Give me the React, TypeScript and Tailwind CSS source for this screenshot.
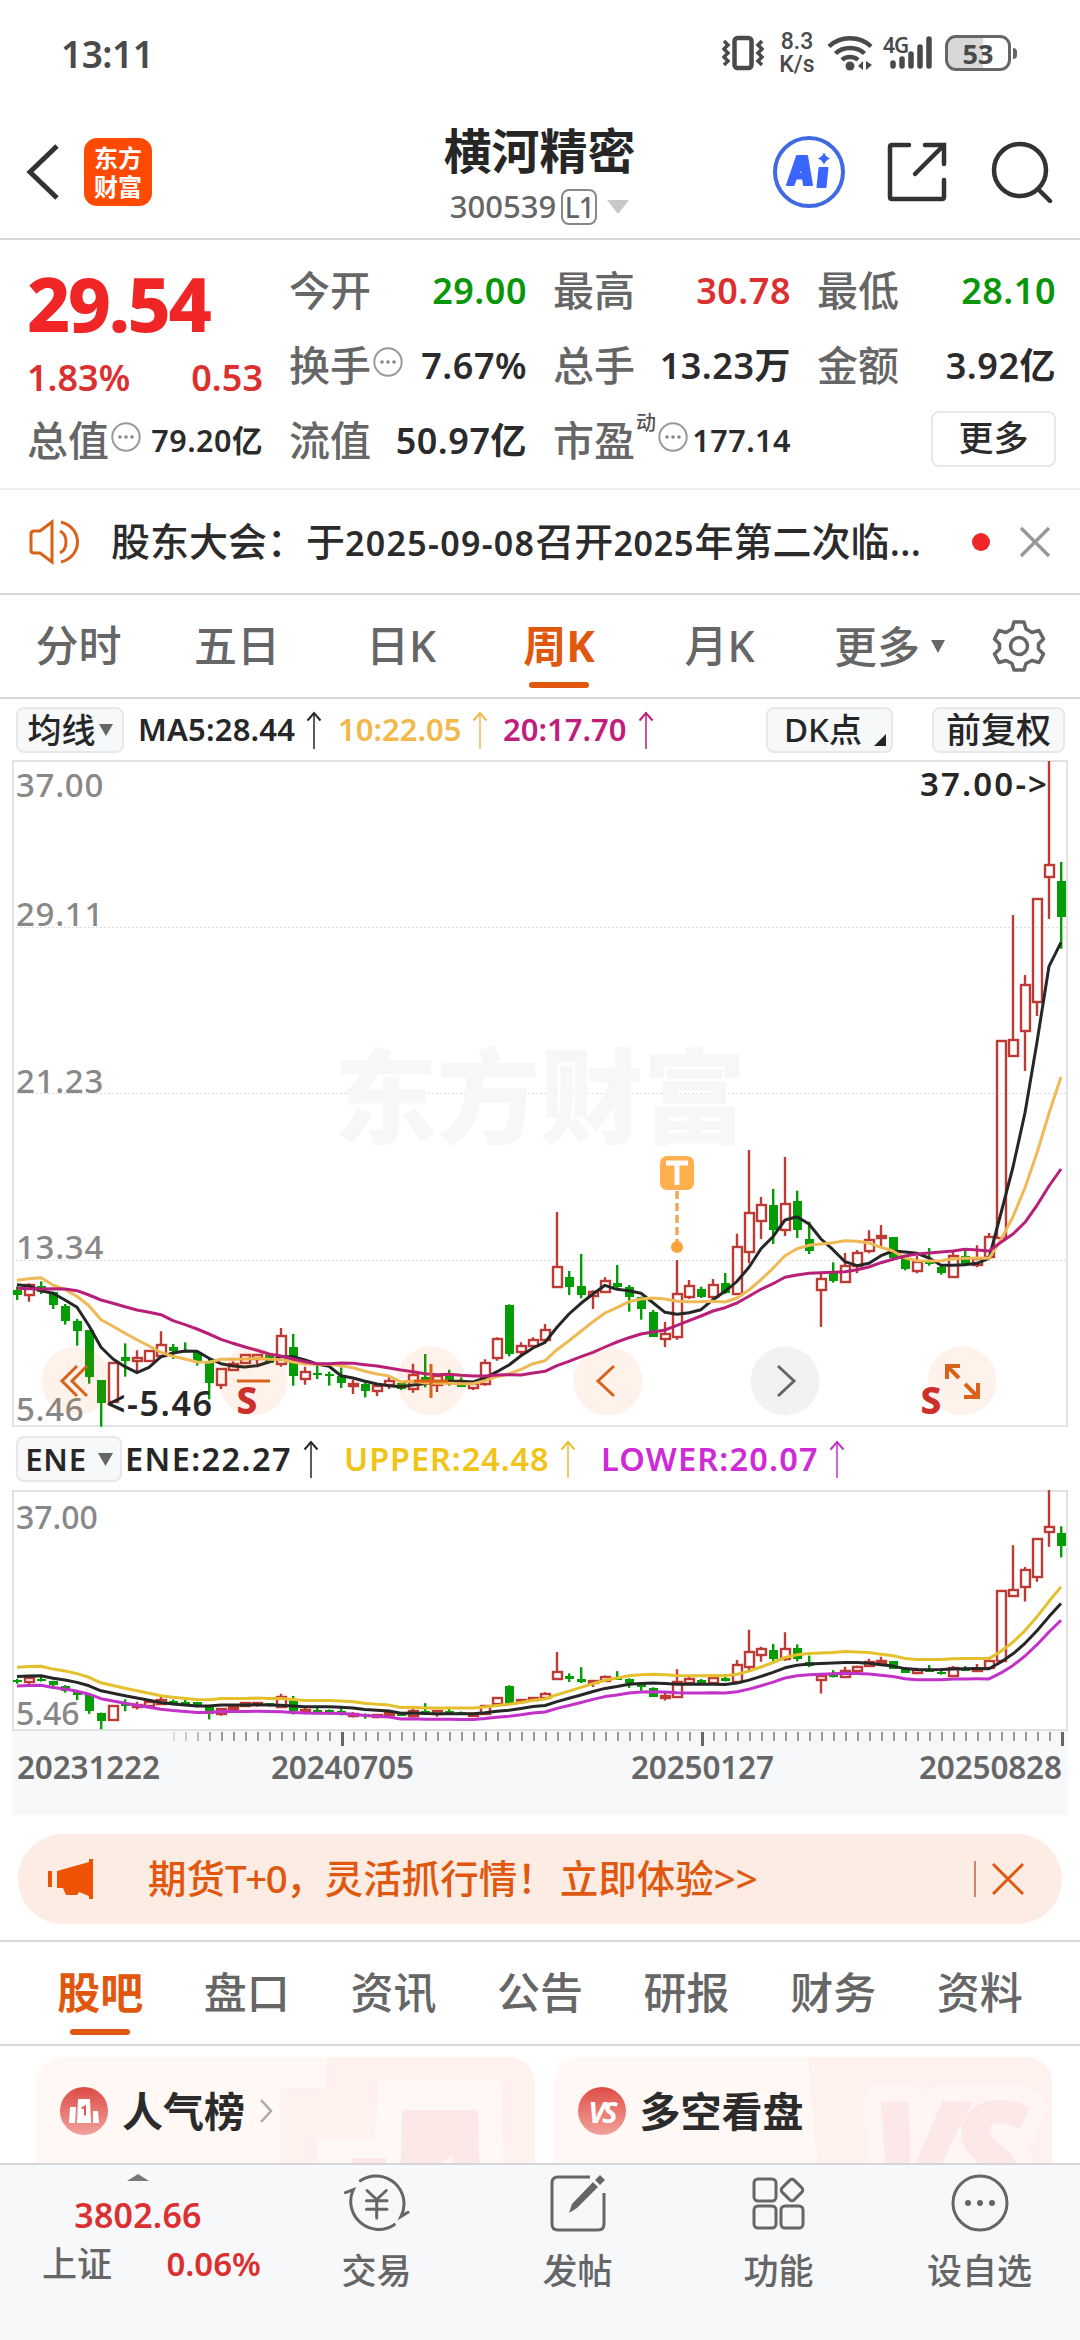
import React from 'react';

type Candle = [kind: 'r' | 'g', high: number, top: number, bottom: number, low: number];

const RED = '#bd3a35';
const GREEN = '#059d05';

// Weekly candles, values in thirds of a pixel around the 16.2 level
const candles: Candle[] = [
    ['g', 472, 483, 497, 513], ['r', 463, 467, 497, 518], ['g', 457, 470, 490, 495], ['g', 488, 490, 527, 540],
    ['g', 525, 530, 576, 587], ['g', 570, 576, 607, 650], ['g', 604, 604, 743, 764], ['g', 754, 754, 822, 893],
    ['r', 701, 701, 820, 820], ['g', 643, 683, 696, 743], ['r', 664, 688, 697, 728], ['r', 665, 665, 695, 695],
    ['r', 607, 647, 680, 680], ['g', 645, 655, 665, 690], ['g', 640, 662, 668, 670], ['g', 665, 668, 698, 710],
    ['g', 690, 698, 762, 811], ['r', 721, 721, 767, 780], ['r', 697, 704, 723, 723], ['r', 677, 677, 703, 703],
    ['r', 677, 677, 690, 705], ['g', 677, 677, 703, 703], ['r', 597, 621, 704, 713], ['g', 615, 653, 741, 770],
    ['r', 713, 730, 750, 767], ['g', 710, 732, 738, 750], ['g', 728, 734, 740, 770], ['g', 715, 741, 762, 777],
    ['r', 752, 764, 768, 795], ['g', 762, 764, 785, 805], ['r', 771, 771, 785, 801], ['r', 745, 757, 767, 780],
    ['g', 760, 763, 779, 783], ['r', 704, 737, 781, 791], ['g', 675, 743, 755, 775], ['r', 740, 740, 768, 789],
    ['g', 722, 740, 756, 770], ['g', 745, 752, 773, 773], ['r', 762, 765, 776, 783], ['r', 691, 701, 766, 770],
    ['r', 625, 631, 686, 695], ['g', 526, 528, 674, 682], ['r', 640, 652, 668, 682], ['r', 625, 632, 650, 655],
    ['r', 585, 602, 634, 640], ['r', 249, 415, 475, 475], ['g', 426, 445, 474, 498], ['g', 375, 472, 498, 508],
    ['r', 484, 488, 500, 540], ['r', 445, 457, 490, 490], ['g', 408, 462, 474, 480], ['g', 468, 475, 503, 548],
    ['g', 503, 503, 540, 572], ['g', 543, 548, 623, 623], ['r', 579, 614, 630, 654], ['r', 393, 496, 623, 632],
    ['r', 453, 472, 503, 510], ['g', 473, 479, 503, 507], ['r', 450, 468, 505, 510], ['g', 432, 462, 493, 495],
    ['r', 314, 353, 496, 496], ['r', 63, 252, 370, 403], ['r', 204, 227, 276, 330], ['g', 180, 228, 303, 345],
    ['r', 84, 224, 304, 321], ['g', 185, 216, 304, 327], ['g', 278, 329, 365, 375], ['r', 430, 449, 482, 594],
    ['g', 400, 433, 455, 461], ['r', 372, 410, 460, 460], ['r', 363, 371, 410, 433], ['r', 304, 332, 366, 373],
    ['r', 288, 322, 326, 357], ['g', 324, 324, 387, 387], ['g', 385, 387, 421, 424], ['r', 380, 400, 427, 433],
    ['g', 357, 395, 405, 410], ['g', 405, 415, 433, 437], ['r', 366, 380, 445, 445], ['g', 366, 380, 406, 408],
    ['r', 349, 390, 408, 415], ['r', 312, 324, 384, 384], ['r', -264, -264, 326, 326], ['r', -642, -266, -219, -219],
    ['r', -462, -433, -294, -174], ['r', -691, -691, -380, -339], ['r', -1104, -791, -755, -630], ['g', -801, -744, -636, -541],
];

const ma5 = [
    467, 471, 485, 493, 513, 535, 590, 655, 690, 713, 731, 715, 683, 672, 666, 667, 688, 704, 711, 714, 710, 699,
    683, 683, 693, 705, 712, 740, 747, 757, 765, 770, 773, 768, 764, 759, 757, 757, 759, 747, 728, 708, 680, 657,
    640, 595, 555, 523, 495, 469, 481, 485, 493, 521, 550, 556, 551, 542, 512, 487, 457, 415, 359, 323, 273, 263,
    285, 330, 362, 398, 410, 403, 380, 366, 369, 373, 387, 409, 409, 407, 403, 388, 252, 114, -49, -261, -488, -560,
];
const ma10 = [
    454, 449, 446, 468, 482, 502, 530, 572, 592, 613, 632, 651, 670, 682, 690, 699, 700, 691, 691, 690, 688, 691,
    692, 699, 705, 706, 706, 710, 716, 727, 735, 741, 759, 757, 762, 763, 763, 764, 764, 755, 743, 734, 721, 704,
    695, 662, 635, 607, 578, 552, 536, 518, 510, 507, 510, 517, 518, 518, 517, 519, 507, 483, 452, 418, 380, 359,
    349, 345, 341, 335, 337, 342, 355, 366, 387, 395, 396, 395, 389, 388, 387, 388, 332, 263, 176, 71, -47, -156,
];
const ma20 = [
    478, 479, 480, 479, 480, 485, 498, 513, 523, 533, 543, 550, 557, 575, 587, 600, 615, 631, 643, 654, 664, 675,
    681, 690, 698, 704, 704, 702, 703, 707, 711, 717, 723, 728, 734, 737, 736, 739, 741, 741, 738, 737, 738, 732,
    727, 710, 697, 683, 670, 654, 639, 626, 615, 609, 603, 589, 575, 561, 546, 536, 522, 502, 481, 464, 445, 438,
    433, 431, 430, 428, 422, 414, 401, 391, 381, 375, 372, 369, 366, 361, 363, 366, 340, 315, 280, 229, 171, 120,
];

const xAt = (i: number) => 5 + i * 12;
const mainY = (v: number) => v / 3 + 369;
const subY = (v: number) => ((v / 3 + 368) / 665) * 239;
const priceAt = (v: number) => 37 - ((v / 3 + 368) / 665) * 31.54;
const priceToSub = (p: number) => ((37 - p) / 31.54) * 239;

const linePoints = (values: number[], toY: (v: number) => number) =>
    values.map((v, i) => `${xAt(i)},${toY(v).toFixed(1)}`).join(' ');

function Candles({ toY }: { toY: (v: number) => number }) {
    return (
        <g>
            {candles.map(([kind, high, top, bottom, low], i) => {
                const x = xAt(i);
                const t = Math.round(toY(top));
                const b = Math.max(Math.round(toY(bottom)), t + 2);
                if (kind === 'g') {
                    return (
                        <g key={i} fill={GREEN}>
                            <rect x={x - 1} y={toY(high)} width={2.4} height={toY(low) - toY(high)} />
                            <rect x={x - 4} y={t} width={9} height={b - t} />
                        </g>
                    );
                }
                return (
                    <g key={i} stroke={RED} strokeWidth={2.4} fill="none">
                        <path d={`M${x} ${toY(high)}V${t}M${x} ${b}V${toY(low)}`} />
                        <rect x={x - 4} y={t} width={9} height={b - t} />
                    </g>
                );
            })}
        </g>
    );
}

function UpArrow({ color }: { color: string }) {
    return (
        <svg width="16" height="38" viewBox="0 0 16 38" fill="none" stroke={color} className="shrink-0">
            <path d="M8 2V38" strokeWidth="1.5" />
            <path d="M1.5 9.5L8 2L14.5 9.5" strokeWidth="2" />
        </svg>
    );
}

function Dots() {
    return (
        <svg width="30" height="30" viewBox="0 0 30 30" className="shrink-0">
            <circle cx="15" cy="15" r="13.7" fill="none" stroke="#9a9a9a" strokeWidth="2" />
            <circle cx="9" cy="15" r="1.8" fill="#888" />
            <circle cx="15" cy="15" r="1.8" fill="#888" />
            <circle cx="21" cy="15" r="1.8" fill="#888" />
        </svg>
    );
}

function StatusBar() {
    return (
        <div className="flex h-[106px] items-center justify-between pr-[63px] pl-[61px] text-[#4a4a4a]">
            <span className="text-[37px] font-semibold tracking-[-0.5px]">13:11</span>
            <div className="flex items-center">
                <svg width="42" height="36" viewBox="0 0 42 36" fill="none" stroke="#4a4a4a" strokeWidth="3">
                    <rect x="12.5" y="3" width="17" height="30" rx="3" strokeWidth="4.5" />
                    <path d="M2 6L6 10L2 14L6 18L2 22L6 26L2 30M40 6L36 10L40 14L36 18L40 22L36 26L40 30" strokeWidth="3.5" />
                </svg>
                <div className="ml-[15px] flex w-[36px] flex-col items-center font-['Roboto'] text-[23px] leading-[23px] font-medium">
                    <span>8.3</span>
                    <span>K/s</span>
                </div>
                <svg width="46" height="36" viewBox="0 0 46 36" fill="none" stroke="#4a4a4a" strokeWidth="4.5" className="ml-[12px]">
                    <path d="M2 11.5C13 0.5 33 0.5 44 11.5" />
                    <path d="M8.500 18.500C16 11 30 11 37.500 18.500" />
                    <path d="M15 25C19 21 27 21 31 25" />
                    <circle cx="23" cy="31" r="4.5" fill="#4a4a4a" stroke="none" />
                    <path d="M31 31l5-5v9zM45 30l-6 5v-9z" fill="#4a4a4a" stroke="none" />
                </svg>
                <div className="relative ml-[10px] h-[36px] w-[52px]">
                    <span className="absolute top-0 left-0 text-[21px] leading-[21px] font-semibold tracking-[-1px]">4G</span>
                    <svg width="52" height="36" viewBox="0 0 52 36" stroke="#4a4a4a" strokeWidth="5.500" strokeLinecap="round">
                        <path d="M10 28V31M19 24V31M28 19V31M37 12V31M46 4V31" />
                    </svg>
                </div>
                <div className="ml-[10px] flex h-[36px] w-[66px] items-center justify-center rounded-[11px] border-[3px] border-[#666] bg-linear-to-r from-[#d8d8d8] from-58% to-white to-58% text-[27px] font-bold">
                    53
                </div>
                <div className="ml-[2px] h-[11px] w-[4px] rounded-r bg-[#666]" />
            </div>
        </div>
    );
}

function Header() {
    return (
        <div className="flex h-[134px] items-center justify-between border-b-2 border-[#d8d8d8] pr-[27px] pl-[26px]">
            <div className="flex w-[340px] items-center">
                <svg width="34" height="56" viewBox="0 0 34 56" fill="none" stroke="#333" strokeWidth="5">
                    <path d="M31 2L4 28L31 54" />
                </svg>
                <div className="ml-6 flex h-[68px] w-[68px] flex-col items-center justify-center rounded-[13px] bg-[#ff4a05] text-[24px] leading-[29px] font-bold text-white">
                    <span>东方</span>
                    <span>财富</span>
                </div>
            </div>
            <div className="flex flex-col items-center pt-1">
                <h1 className="text-[48px] leading-[56px] font-semibold text-[#262626]">横河精密</h1>
                <div className="mt-[9px] flex h-[38px] items-center text-[31px] font-medium text-[#666]">
                    <span>300539</span>
                    <span className="ml-[5px] flex h-[36px] w-[36px] items-center justify-center rounded-[8px] border-2 border-[#888] text-[28px] tracking-[-1px]">L1</span>
                    <svg width="22" height="14" viewBox="0 0 22 14" className="ml-[10px]">
                        <path d="M0 0H22L11 14Z" fill="#c8c8c8" />
                    </svg>
                </div>
            </div>
            <div className="flex w-[340px] items-center justify-end">
                <svg width="74" height="74" viewBox="0 0 74 74">
                    <circle cx="37" cy="37" r="34" fill="none" stroke="#4169e0" strokeWidth="4" />
                    <path d="M25 21H35L40 50H32L31 43.500H24L21.500 50H15ZM29.500 32L26.500 39H30.500Z" fill="#3a66ff" stroke="#3a66ff" strokeWidth="2" strokeLinejoin="round" fillRule="evenodd" />
                    <path d="M47.500 33H55.500L53.500 52H45.500Z" fill="#3a66ff" stroke="#3a66ff" strokeWidth="2" strokeLinejoin="round" />
                    <path d="M52 17.500Q54 22 58 23.500Q54 25 52 29.500Q50 25 46 23.500Q50 22 52 17.500Z" fill="#3a66ff" />
                </svg>
                <svg width="62" height="62" viewBox="0 0 62 62" fill="none" stroke="#333" strokeWidth="4.5" strokeLinecap="round" className="ml-[40px]">
                    <path d="M23 4H6Q4 4 4 6V56Q4 58 6 58H56Q58 58 58 56V39" />
                    <path d="M39 4H58V23M58 4L29 33" />
                </svg>
                <svg width="62" height="62" viewBox="0 0 62 62" fill="none" stroke="#333" strokeWidth="4.5" strokeLinecap="round" className="ml-[43px]">
                    <circle cx="29" cy="29" r="26" />
                    <path d="M47 48L59 60" />
                </svg>
            </div>
        </div>
    );
}

interface QuoteProps {
    label: string;
    value: string;
    color?: string;
    dots?: boolean;
    small?: boolean;
    mark?: string;
}

function Quote({ label, value, color = 'text-[#2b2b2b]', dots, small, mark }: QuoteProps) {
    return (
        <div className="flex h-[75px] items-center">
            <span className="text-[41px] text-[#666]">{label}</span>
            {mark && <span className="mb-9 ml-[1px] text-[20px] text-[#555]">{mark}</span>}
            {dots && <span className="mb-2 ml-[2px]"><Dots /></span>}
            <span className={`ml-auto font-semibold tracking-[0.5px] ${small ? 'text-[30.5px]' : 'text-[36px]'} ${color}`}>{value}</span>
        </div>
    );
}

function Quotes() {
    return (
        <div className="flex h-[250px] justify-between border-b-2 border-[#eee] pt-[13px] pr-[24px] pl-[27px] font-medium">
            <div className="w-[236px]">
                <div className="flex h-[100px] items-center text-[75px] font-extrabold tracking-[-2.5px] text-[#f02525]">29.54</div>
                <div className="flex h-[50px] items-center justify-between text-[36px] font-semibold text-[#dc2f2f]">
                    <span>1.83%</span>
                    <span>0.53</span>
                </div>
                <Quote label="总值" value="79.20亿" dots small />
            </div>
            <div className="w-[238px]">
                <Quote label="今开" value="29.00" color="text-[#0a960a]" />
                <Quote label="换手" value="7.67%" dots />
                <Quote label="流值" value="50.97亿" />
            </div>
            <div className="w-[238px]">
                <Quote label="最高" value="30.78" color="text-[#dc2f2f]" />
                <Quote label="总手" value="13.23万" />
                <Quote label="市盈" value="177.14" mark="动" dots small />
            </div>
            <div className="w-[239px]">
                <Quote label="最低" value="28.10" color="text-[#0a960a]" />
                <Quote label="金额" value="3.92亿" />
                <div className="ml-auto mt-[8px] flex h-[56px] w-[125px] items-center justify-center rounded-lg border-2 border-[#e6e8ea] pb-1 text-[35px] text-[#2b2b2b]">更多</div>
            </div>
        </div>
    );
}

function Notice() {
    return (
        <div className="flex h-[105px] items-center border-b-2 border-[#d8d8d8] pr-[29px] pl-[29px]">
            <svg width="52" height="46" viewBox="0 0 52 46" fill="none" stroke="#d9621a" strokeWidth="3">
                <path d="M23 3L11 12H5Q2 12 2 15V31Q2 34 5 34H11L23 43Z" />
                <path d="M31 12C39 16 39 30 31 34M32 3C54 9 54 37 32 43" />
            </svg>
            <p className="ml-[30px] w-[831px] pb-[2px] text-[39px] font-medium whitespace-nowrap text-[#2b2b2b]">
                股东大会：于<span className="text-[34px] font-semibold tracking-[1.3px]">2025-09-08</span>召开<span className="text-[34px] font-semibold tracking-[0.8px]">2025</span>年第二次临...
            </p>
            <span className="ml-[30px] h-[18px] w-[18px] rounded-full bg-[#f02525]" />
            <svg width="32" height="32" viewBox="0 0 32 32" stroke="#999" strokeWidth="3.5" className="ml-auto">
                <path d="M2 2L30 30M30 2L2 30" />
            </svg>
        </div>
    );
}

function PeriodTabs() {
    const tabs = [
        { name: '分时', width: 'w-[157px]' },
        { name: '五日', width: 'w-[160px]' },
        { name: '日K', width: 'w-[168px]' },
        { name: '周K', width: 'w-[148px]' },
        { name: '月K', width: 'w-[173px]' },
    ];
    return (
        <div className="flex h-[104px] items-center border-b-2 border-[#d8d8d8] text-[43px] font-medium text-[#666]">
            {tabs.map(tab => (
                <div key={tab.name} className={`flex h-full flex-col items-center justify-center ${tab.width} ${tab.name === '周K' ? 'font-bold text-[#e0580f]' : ''}`}>
                    <span className="pt-[19px]">{tab.name}</span>
                    <span className={`mt-[15px] h-[6px] w-[60px] rounded-full ${tab.name === '周K' ? 'bg-[#e0580f]' : ''}`} />
                </div>
            ))}
            <span className="ml-[28px]">更多</span>
            <svg width="14" height="13" viewBox="0 0 14 13" className="ml-[11px]">
                <path d="M0 0H14L7 13Z" fill="#666" />
            </svg>
            <svg width="54" height="54" viewBox="0 0 54 54" fill="none" stroke="#666" strokeWidth="3.5" strokeLinejoin="round" className="ml-[47px]">
                <path d="M22 3H32L34 10L40 13.500L47 11.500L51.500 20L46.500 25V30L51.500 35L47 43.500L40 41.500L34 44.500L32 51H22L20 44.500L14 41.500L7 43.500L2.500 35L7.500 30V25L2.500 20L7 11.500L14 13.500L20 10Z" />
                <circle cx="27" cy="27" r="8.500" />
            </svg>
        </div>
    );
}

function MainChart() {
    const axis = [
        { label: '37.00', y: 37 },
        { label: '29.11', y: 166 },
        { label: '21.23', y: 333 },
        { label: '13.34', y: 499 },
        { label: '5.46', y: 661 },
    ];
    const controls = [64, 241, 419, 596, 773, 950];
    return (
        <svg width="1056" height="668" viewBox="0 0 1056 668" className="ml-3 block overflow-visible font-medium">
            <rect x="1" y="1" width="1054" height="665" fill="none" stroke="#e2e2e2" strokeWidth="2" />
            <path d="M0 167.500H1056M0 333.500H1056M0 500.500H1056" stroke="#dcdcdc" strokeDasharray="2 2" />
            <text x="322" y="376" fontSize="103" fontWeight="900" fill="#f7f7f7">东方财富</text>
            {axis.map(a => (
                <text key={a.label} x="4" y={a.y} fontSize="33" letterSpacing="0.7" fill="#888">{a.label}</text>
            ))}
            <Candles toY={mainY} />
            <g fill="none" strokeWidth="3" strokeLinejoin="round">
                <polyline points={linePoints(ma5, mainY)} stroke="#262626" />
                <polyline points={linePoints(ma10, mainY)} stroke="#efb955" />
                <polyline points={linePoints(ma20, mainY)} stroke="#b81f78" />
            </g>
            <text x="908" y="36" fontSize="33" fontWeight="600" textLength="127" fill="#262626">37.00-&gt;</text>
            <text x="94" y="656" fontSize="34" fontWeight="600" textLength="106" fill="#262626">&lt;-5.46</text>
            {controls.map(cx => (
                <circle key={cx} cx={cx} cy="621" r="34.500" fill={cx === 773 ? '#000' : '#ee5305'} fillOpacity={cx === 773 ? 0.05 : 0.08} />
            ))}
            <g fill="none" stroke="#d9621a" strokeWidth="3">
                <path d="M65 606L50 621L65 636M75 606L60 621L75 636" />
                <path d="M225 621H258M402 621H436M419 604V638" />
                <path d="M602 606L586 621L602 636" />
                <path d="M766 606L782 621L766 636" stroke="#666" />
                <path d="M935 619V606H948M935 606L947 618M966 623V637H952M966 637L953 624" strokeWidth="4" />
            </g>
            <g fill="#cc302c" fontSize="37" fontWeight="800" textAnchor="middle">
                <text x="235" y="654">S</text>
                <text x="919" y="654">S</text>
            </g>
            <rect x="648" y="396" width="34" height="34" rx="7" fill="#ffaf4d" />
            <path d="M654 403H676M665 403V425" stroke="#fff" strokeWidth="5" />
            <path d="M665 431V482" stroke="#efa956" strokeWidth="3.500" strokeDasharray="8 4" />
            <circle cx="665" cy="487" r="6" fill="#fba23a" />
        </svg>
    );
}

function SubChart() {
    const scaled = (ratio: number) =>
        ma10.map((v, i) => `${xAt(i)},${priceToSub(priceAt(v) * ratio).toFixed(1)}`).join(' ');
    return (
        <svg width="1056" height="241" viewBox="0 0 1056 241" className="ml-3 block overflow-visible font-medium">
            <rect x="1" y="1" width="1054" height="239" fill="none" stroke="#e2e2e2" strokeWidth="2" />
            <text x="4" y="39" fontSize="32" fill="#888">37.00</text>
            <text x="4" y="235" fontSize="32" fill="#888">5.46</text>
            <Candles toY={subY} />
            <g fill="none" strokeWidth="3" strokeLinejoin="round">
                <polyline points={scaled(1.1)} stroke="#e5c02c" />
                <polyline points={scaled(1)} stroke="#262626" />
                <polyline points={scaled(0.9)} stroke="#c231c8" />
            </g>
        </svg>
    );
}

function TimeAxis() {
    const ticks = Array.from({ length: 75 }, (_, k) => 162 + k * 12);
    return (
        <svg width="1056" height="84" viewBox="0 0 1056 84" className="ml-3 block bg-[#f7f8fa] font-semibold">
            {ticks.map((x, k) => {
                const major = x === 330 || x === 690 || x === 1050;
                return (
                    <rect key={x} x={x - 1} y="1" width={major ? 3 : 2} height={major ? 14 : 9} fill={major ? '#666' : '#999'} opacity={Math.min(1, 0.3 + k * 0.18)} />
                );
            })}
            <g fontSize="31.500" fill="#666">
                <text x="5" y="48" textLength="143">20231222</text>
                <text x="259" y="48" textLength="143">20240705</text>
                <text x="619" y="48" textLength="143">20250127</text>
                <text x="907" y="48" textLength="143">20250828</text>
            </g>
        </svg>
    );
}

function MaBar() {
    return (
        <div className="flex h-[61px] items-center pr-[15px] pl-4 text-[31px] font-semibold text-[#262626]">
            <div className="flex h-[46px] w-[108px] items-center justify-center rounded-lg border-2 border-[#e6e8ea] bg-[#f7f8fa] text-[34px] font-medium">
                均线
                <svg width="14" height="12" viewBox="0 0 14 12" className="ml-[3px]">
                    <path d="M0 0H14L7 12Z" fill="#666" />
                </svg>
            </div>
            <span className="ml-[14px] mr-[10px] w-[158px] tracking-[0.2px]">MA5:28.44</span>
            <UpArrow color="#262626" />
            <span className="ml-[16px] mr-[10px] w-[124px] text-[#f2b84b]">10:22.05</span>
            <UpArrow color="#f2b84b" />
            <span className="ml-[15px] mr-[9px] w-[126px] text-[#c01d7c]">20:17.70</span>
            <UpArrow color="#c01d7c" />
            <div className="relative ml-auto flex h-[46px] w-[127px] items-center rounded-lg border-2 border-[#e6e8ea] bg-[#f7f8fa] pl-[16px] text-[33px] font-medium">
                DK点
                <svg width="12" height="12" viewBox="0 0 12 12" className="absolute right-[5px] bottom-[5px]">
                    <path d="M12 0V12H0Z" fill="#262626" />
                </svg>
            </div>
            <div className="ml-[39px] flex h-[46px] w-[133px] items-center justify-center rounded-lg border-2 border-[#e6e8ea] bg-[#f7f8fa] text-[35px] font-medium">前复权</div>
        </div>
    );
}

function EneBar() {
    return (
        <div className="flex h-[62px] items-center pl-4 text-[32.500px] font-semibold text-[#262626]">
            <div className="flex h-[46px] w-[106px] items-center justify-center rounded-lg border-2 border-[#e6e8ea] bg-[#f7f8fa] text-[31px]">
                <span className="tracking-[0.8px]">ENE</span>
                <svg width="15" height="13" viewBox="0 0 15 13" className="ml-[11px]">
                    <path d="M0 0H15L7.500 13Z" fill="#666" />
                </svg>
            </div>
            <span className="ml-[3px] w-[178px] tracking-[1.4px] whitespace-nowrap">ENE:22.27</span>
            <UpArrow color="#262626" />
            <span className="ml-[25px] w-[216px] tracking-[0.9px] whitespace-nowrap text-[#f0c419]">UPPER:24.48</span>
            <UpArrow color="#e5c02c" />
            <span className="ml-[25px] w-[228px] tracking-[1.2px] whitespace-nowrap text-[#ce2bd6]">LOWER:20.07</span>
            <UpArrow color="#c231c8" />
        </div>
    );
}

function AdBanner() {
    return (
        <div className="mx-[18px] mt-[19px] mb-[16px] flex h-[90px] items-center rounded-full bg-[#fcece3] pr-[37px] pl-[30px] text-[#e0580f]">
            <svg width="46" height="40" viewBox="0 0 46 40" fill="#ee5305">
                <path d="M0 12H4V28H0ZM9 12L41 3V0H45V40H41V37L31 33L29 36H18L15 29H9Z" />
            </svg>
            <span className="ml-[54px] pb-[2px] text-[38.500px] font-medium whitespace-nowrap">
                期货<span className="tracking-[-1.5px]">T+0</span>，灵活抓行情！<span className="ml-[4px]">立即体验&gt;&gt;</span>
            </span>
            <span className="ml-auto h-[36px] w-[2px] bg-[#c98a65]" />
            <svg width="34" height="34" viewBox="0 0 34 34" stroke="#e0580f" strokeWidth="3" className="ml-[15px]">
                <path d="M2 2L32 32M32 2L2 32" />
            </svg>
        </div>
    );
}

function InfoTabs() {
    const tabs = ['股吧', '盘口', '资讯', '公告', '研报', '财务', '资料'];
    return (
        <div className="flex h-[106px] items-center border-y-2 border-[#d8d8d8] px-[27px] text-[43px] font-medium text-[#666]">
            {tabs.map((name, i) => (
                <div key={name} className={`flex flex-1 flex-col items-center pt-[19px] ${i === 0 ? 'font-bold text-[#e0580f]' : ''}`}>
                    <span>{name}</span>
                    <span className={`mt-[15px] h-[6px] w-[60px] rounded-full ${i === 0 ? 'bg-[#e0580f]' : ''}`} />
                </div>
            ))}
        </div>
    );
}

function Cards() {
    return (
        <div className="flex h-[117px] gap-[19px] overflow-hidden pt-[11px] pr-[28px] pl-[36px] text-[41px] font-bold text-[#2b2b2b]">
            <div className="relative flex h-[140px] flex-1 items-start overflow-hidden rounded-[26px] bg-[#fff8f5]">
                <svg width="260" height="140" viewBox="0 0 260 140" className="absolute top-0 right-0">
                    <path d="M52 0H260V140H230L226 24H104L100 82H42V140H5V32H51Z" fill="#fef1ee" />
                    <path d="M127 53H203L205 140H125ZM76 101H111V140H76Z" fill="#fce8e6" />
                    <path d="M158 110L178 99V140H158Z" fill="#fff5f2" />
                </svg>
                <div className="relative mt-[29px] ml-[24px] flex h-[50px] items-center">
                    <svg width="48" height="48" viewBox="0 0 48 48">
                        <defs>
                            <linearGradient id="badge" x1="0" y1="0" x2="0" y2="1">
                                <stop offset="0" stopColor="#dd4b45" />
                                <stop offset="1" stopColor="#f0a19c" />
                            </linearGradient>
                        </defs>
                        <circle cx="24" cy="24" r="24" fill="url(#badge)" />
                        <path d="M10 20H16L15 36H9ZM18 12H30L31 36H17ZM33 24H38L39 36H33Z" fill="#fff" />
                        <path d="M21.500 21.500L25 19.500V28.500" fill="none" stroke="#dd5a55" strokeWidth="2" />
                    </svg>
                    <span className="ml-[14px]">人气榜</span>
                    <svg width="14" height="24" viewBox="0 0 14 24" fill="none" stroke="#aaa" strokeWidth="2.500" className="ml-[14px]">
                        <path d="M2 1L12 12L2 23" />
                    </svg>
                </div>
            </div>
            <div className="relative flex h-[140px] flex-1 items-start overflow-hidden rounded-[26px] bg-[#fff8f5]">
                <svg width="244" height="140" viewBox="0 0 244 140" className="absolute top-0 right-0">
                    <path d="M0 0H244V140H12Z" fill="#fef1ee" />
                    <text x="62" y="150" fontSize="148" fontStyle="italic" fontWeight="900" letterSpacing="-14" fill="#fce8e6" stroke="#fff6f3" strokeWidth="34" strokeLinejoin="round" paintOrder="stroke">VS</text>
                </svg>
                <div className="relative mt-[29px] ml-[24px] flex h-[50px] items-center">
                    <div className="flex h-[48px] w-[48px] items-center justify-center rounded-full bg-linear-to-b from-[#dd4b45] to-[#f0a19c] text-[29px] tracking-[-3px] text-white italic">VS</div>
                    <span className="ml-[14px]">多空看盘</span>
                </div>
            </div>
        </div>
    );
}

function BottomBar() {
    const box = 'flex w-[201px] flex-col items-center pt-[8px] text-[35px]';
    return (
        <div className="flex h-[177px] border-t-2 border-[#d4d6d8] bg-[#f7f8fa] font-medium text-[#666]">
            <div className="flex w-[276px] flex-col items-center pt-[9px]">
                <svg width="22" height="7" viewBox="0 0 22 7"><path d="M11 0L22 7H0Z" fill="#777" /></svg>
                <span className="mt-[17px] text-[34px] leading-[34px] font-semibold tracking-[0.2px] text-[#dc2f2f]">3802.66</span>
                <div className="mt-[14px] flex w-full items-center justify-between pr-[15px] pl-[42px] text-[35px] leading-[36px]">
                    <span>上证</span>
                    <span className="text-[33px] font-semibold text-[#dc2f2f]">0.06%</span>
                </div>
            </div>
            <div className={box}>
                <svg width="66" height="60" viewBox="0 0 66 60" fill="none" stroke="#666" strokeWidth="3" strokeLinecap="round">
                    <path d="M16.300 7.700A28 28 0 0 1 57 43.500L64 39.300M50.300 51.700A28 28 0 0 1 9.300 16.700L1.500 19.700" />
                    <path d="M23 17.500L32.700 26.500L42.300 17.500M32.700 27V45M22.500 27.700H43M22.500 36.300H43" />
                </svg>
                <span className="mt-[20px]">交易</span>
            </div>
            <div className={box}>
                <svg width="58" height="60" viewBox="0 0 58 60" fill="none" stroke="#666" strokeWidth="3">
                    <path d="M41 4H9Q3 4 3 10V51Q3 57 9 57H49Q55 57 55 51V20" />
                    <path d="M20 40L23 31L44 9L49 14L28 35ZM46 7L51 2L56 7L51 12Z" fill="#666" stroke="none" />
                </svg>
                <span className="mt-[20px]">发帖</span>
            </div>
            <div className={box}>
                <svg width="54" height="60" viewBox="0 0 54 60" fill="none" stroke="#666" strokeWidth="3">
                    <rect x="2" y="6" width="22" height="22" rx="4" />
                    <rect x="2" y="33" width="22" height="22" rx="4" />
                    <rect x="29" y="33" width="22" height="22" rx="4" />
                    <rect x="31.500" y="8.500" width="17" height="17" rx="3" transform="rotate(45 40 17)" />
                </svg>
                <span className="mt-[20px]">功能</span>
            </div>
            <div className={box}>
                <svg width="60" height="60" viewBox="0 0 60 60">
                    <circle cx="30" cy="30" r="27" fill="none" stroke="#666" strokeWidth="3" />
                    <g fill="#666">
                        <circle cx="18" cy="30" r="3" />
                        <circle cx="30" cy="30" r="3" />
                        <circle cx="42" cy="30" r="3" />
                    </g>
                </svg>
                <span className="mt-[20px]">设自选</span>
            </div>
        </div>
    );
}

export default function App() {
    return (
        <div className="h-[2340px] w-[1080px] overflow-hidden bg-white font-['Noto_Sans','Noto_Sans_CJK_SC',sans-serif] leading-none">
            <StatusBar />
            <Header />
            <Quotes />
            <Notice />
            <PeriodTabs />
            <MaBar />
            <MainChart />
            <EneBar />
            <SubChart />
            <TimeAxis />
            <AdBanner />
            <InfoTabs />
            <Cards />
            <BottomBar />
        </div>
    );
}
